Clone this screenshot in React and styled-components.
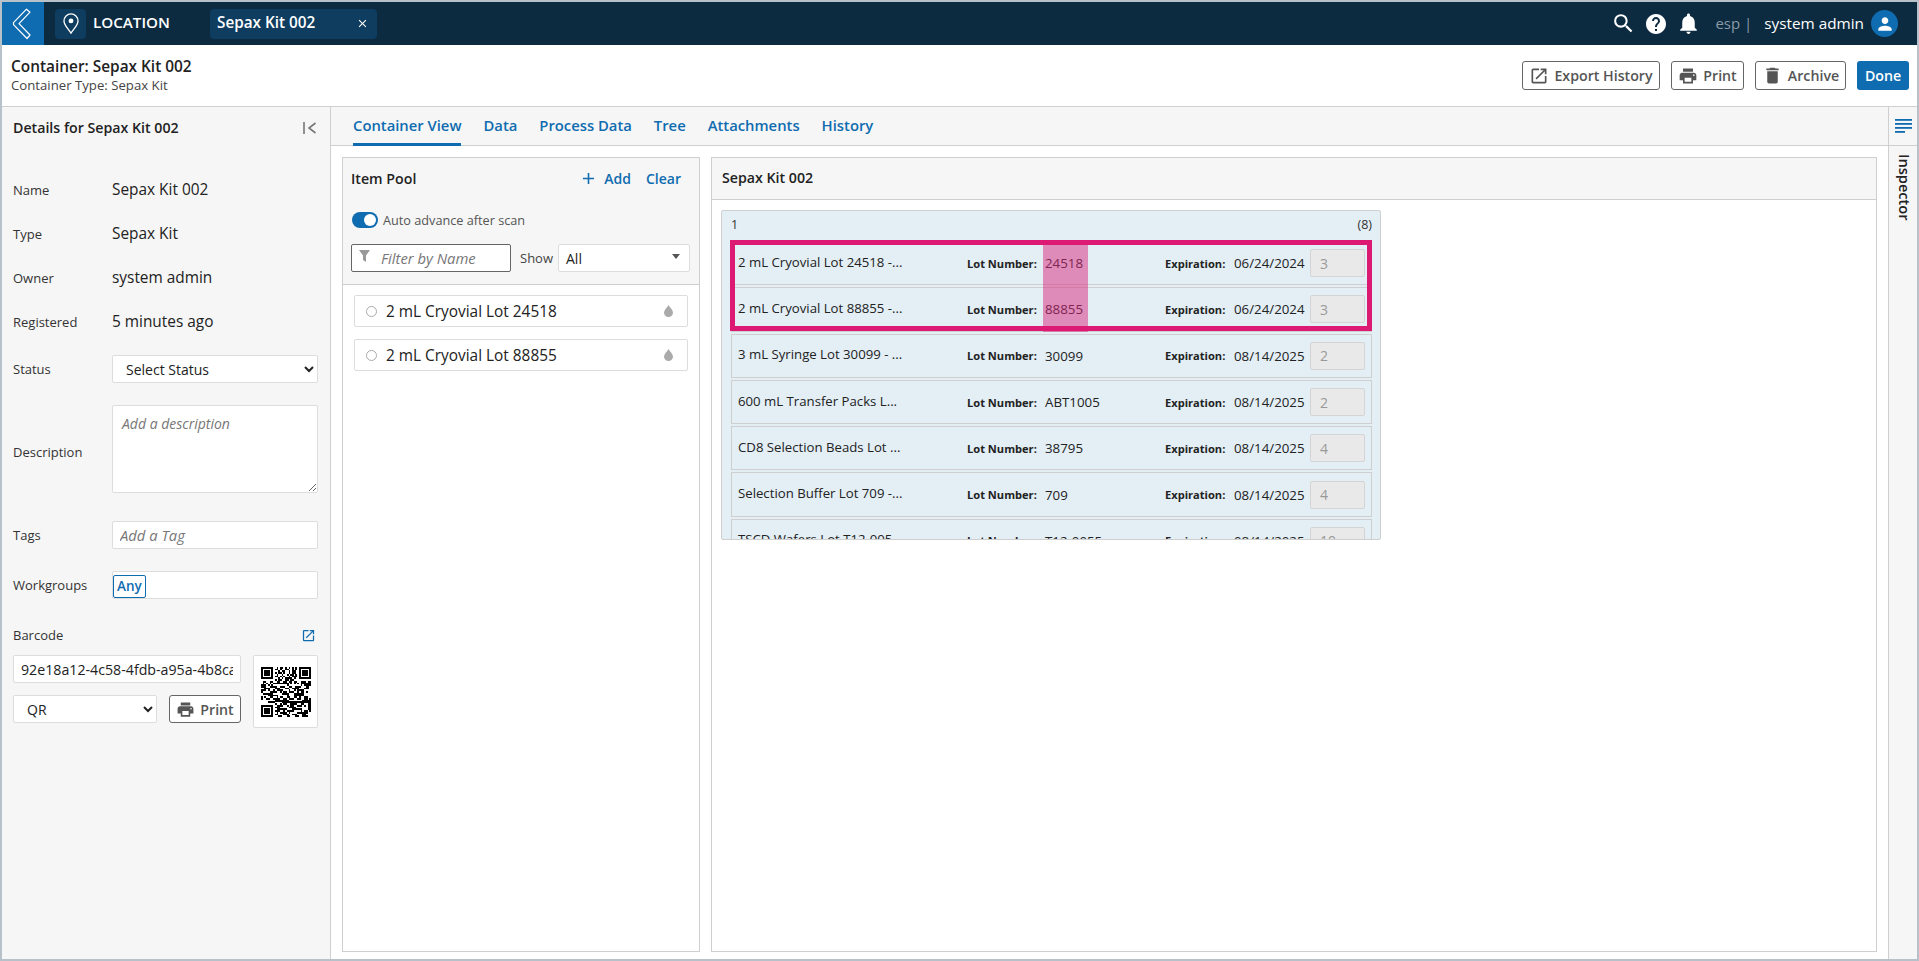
import React from "react";
import styled, { createGlobalStyle } from "styled-components";
import { MdPrint, MdDelete, MdOpenInNew, MdHelp, MdNotifications, MdPerson, MdSearch, MdClose, MdAdd } from "react-icons/md";

const blue = "#0f6cb0";
const line = "#cfcfcf";

const items = [
  { name: "2 mL Cryovial Lot 24518 -...", lot: "24518", exp: "06/24/2024", qty: 3 },
  { name: "2 mL Cryovial Lot 88855 -...", lot: "88855", exp: "06/24/2024", qty: 3 },
  { name: "3 mL Syringe Lot 30099 - ...", lot: "30099", exp: "08/14/2025", qty: 2 },
  { name: "600 mL Transfer Packs L...", lot: "ABT1005", exp: "08/14/2025", qty: 2 },
  { name: "CD8 Selection Beads Lot ...", lot: "38795", exp: "08/14/2025", qty: 4 },
  { name: "Selection Buffer Lot 709 -...", lot: "709", exp: "08/14/2025", qty: 4 },
  { name: "TSCD Wafers Lot T12-005...", lot: "T12-0055", exp: "08/14/2025", qty: 10 },
];

const tabs = ["Container View", "Data", "Process Data", "Tree", "Attachments", "History"];

// fake qr, just a fixed pattern
function QrCode() {
  const n = 29;
  const cells = [];
  const finder = (x, y) => {
    for (const [ox, oy] of [[0, 0], [n - 7, 0], [0, n - 7]]) {
      const a = x - ox;
      const b = y - oy;
      if (a >= 0 && a < 7 && b >= 0 && b < 7) {
        return a === 0 || a === 6 || b === 0 || b === 6 || (a > 1 && a < 5 && b > 1 && b < 5) ? 1 : 0;
      }
      if (a >= -1 && a <= 7 && b >= -1 && b <= 7) return 0;
    }
    return null;
  };
  for (let y = 0; y < n; y++) {
    for (let x = 0; x < n; x++) {
      const f = finder(x, y);
      const on = f !== null ? f : ((x * 7 + y * 13 + x * y * 5 + (x ^ y) * 3) % 11) % 2 === 0;
      if (on) cells.push(<rect key={x + "-" + y} x={x} y={y} width="1.02" height="1.02" />);
    }
  }
  return (
    <svg width="50" height="50" viewBox="0 0 29 29" fill="#000" shapeRendering="crispEdges">
      {cells}
    </svg>
  );
}

function Drop() {
  return (
    <svg width="9" height="12" viewBox="0 0 9 12" fill="#aaa">
      <path d="M4.5 0 C6 2.5 9 5 9 7.8 A4.5 4.2 0 0 1 0 7.8 C0 5 3 2.5 4.5 0 Z" />
    </svg>
  );
}

export default function App() {
  return (
    <Page>
      <GlobalStyle />
      <NavBar>
        <BackButton>
          <svg width="20" height="32" viewBox="0 0 20 32" fill="none" stroke="#fff" strokeWidth="1.2" strokeLinejoin="round">
            <path d="M14.5 1.2 L18 4.2 L7 15.6 L18 27 L15 30.5 L1.5 16.6 L1.5 14.6 Z" />
          </svg>
        </BackButton>
        <LocationIcon>
          <svg width="16" height="21" viewBox="0 0 18 24" fill="none" stroke="#fff" strokeWidth="1.5">
            <path d="M9 23 C6 18 1 14 1 9 A8 8 0 0 1 17 9 C17 14 12 18 9 23 Z" />
            <circle cx="9" cy="9" r="2.8" fill="#fff" stroke="none" />
          </svg>
        </LocationIcon>
        <LocationText>LOCATION</LocationText>
        <OpenTab>
          <span>Sepax Kit 002</span>
          <MdClose size={13} />
        </OpenTab>
        <NavRight>
          <MdSearch size={25} color="#fff" />
          <MdHelp size={24} color="#fff" />
          <MdNotifications size={25} color="#fff" />
          <NavLang>esp |</NavLang>
          <NavUser>system admin</NavUser>
          <Avatar><MdPerson size={20} color="#fff" /></Avatar>
        </NavRight>
      </NavBar>

      <TitleBar>
        <div>
          <Title>Container: Sepax Kit 002</Title>
          <SubTitle>Container Type: Sepax Kit</SubTitle>
        </div>
        <Actions>
          <OutlineButton $w={138}><MdOpenInNew size={20} />Export History</OutlineButton>
          <OutlineButton $w={73}><MdPrint size={20} />Print</OutlineButton>
          <OutlineButton $w={91}><MdDelete size={21} />Archive</OutlineButton>
          <DoneButton>Done</DoneButton>
        </Actions>
      </TitleBar>

      <Body>
        <Details>
          <DetailsHead>
            <span>Details for Sepax Kit 002</span>
            <svg width="14" height="14" viewBox="0 0 14 14" fill="none" stroke="#777" strokeWidth="1.6">
              <path d="M1 1 V13 M12.5 2 L6 7 L12.5 12" />
            </svg>
          </DetailsHead>
          <InfoRow $h={44}><Label>Name</Label><Value>Sepax Kit 002</Value></InfoRow>
          <InfoRow $h={44}><Label>Type</Label><Value>Sepax Kit</Value></InfoRow>
          <InfoRow $h={44}><Label>Owner</Label><Value>system admin</Value></InfoRow>
          <InfoRow $h={44}><Label>Registered</Label><Value>5 minutes ago</Value></InfoRow>
          <InfoRow $h={38} $mt={6}>
            <Label>Status</Label>
            <StatusSelect defaultValue="">
              <option value="">Select Status</option>
            </StatusSelect>
          </InfoRow>
          <InfoRow $h={88} $mt={17}>
            <DescLabel>Description</DescLabel>
            <TextBox placeholder="Add a description" />
          </InfoRow>
          <InfoRow $h={28} $mt={28}>
            <Label>Tags</Label>
            <FieldInput placeholder="Add a Tag" />
          </InfoRow>
          <InfoRow $h={28} $mt={22}>
            <Label>Workgroups</Label>
            <TagBox><AnyTag>Any</AnyTag></TagBox>
          </InfoRow>
          <BarcodeHead>
            <Label>Barcode</Label>
            <MdOpenInNew size={15} color={blue} />
          </BarcodeHead>
          <BarcodeGrid>
            <BarcodeFields>
              <BarcodeInput defaultValue="92e18a12-4c58-4fdb-a95a-4b8ca7d6e102" />
              <BarcodeRow>
                <QrSelect defaultValue="QR"><option>QR</option></QrSelect>
                <SmallPrint><MdPrint size={19} />Print</SmallPrint>
              </BarcodeRow>
            </BarcodeFields>
            <QrBox><QrCode /></QrBox>
          </BarcodeGrid>
        </Details>

        <Main>
          <TabBar>
            {tabs.map((t, i) => (
              <Tab key={t} $active={i === 0}>{t}</Tab>
            ))}
          </TabBar>
          <Panels>
            <ItemPool>
              <PoolHead>
                <PoolTitleRow>
                  <PanelTitle>Item Pool</PanelTitle>
                  <PoolLinks>
                    <PoolLink $gap={6}><MdAdd size={19} />Add</PoolLink>
                    <PoolLink>Clear</PoolLink>
                  </PoolLinks>
                </PoolTitleRow>
                <ToggleRow>
                  <Toggle />
                  <span>Auto advance after scan</span>
                </ToggleRow>
                <FilterRow>
                  <FilterBox>
                    <svg width="11" height="12" viewBox="0 0 11 12" fill="#999">
                      <path d="M0 0 H11 L7 5.5 V12 L4 10 V5.5 Z" />
                    </svg>
                    <FilterInput placeholder="Filter by Name" />
                  </FilterBox>
                  <ShowLabel>Show</ShowLabel>
                  <ShowSelect>
                    <span>All</span>
                    <Caret />
                  </ShowSelect>
                </FilterRow>
              </PoolHead>
              <PoolList>
                <PoolItem>
                  <Radio />
                  <span>2 mL Cryovial Lot 24518</span>
                  <Drop />
                </PoolItem>
                <PoolItem>
                  <Radio />
                  <span>2 mL Cryovial Lot 88855</span>
                  <Drop />
                </PoolItem>
              </PoolList>
            </ItemPool>

            <KitPanel>
              <KitHead><PanelTitle>Sepax Kit 002</PanelTitle></KitHead>
              <KitBody>
                <Slot>
                  <SlotHead>
                    <span>1</span>
                    <span>(8)</span>
                  </SlotHead>
                  <SlotRows>
                    {items.map((it) => (
                      <SlotRow key={it.lot}>
                        <RowName>{it.name}</RowName>
                        <RowLabel>Lot Number:</RowLabel>
                        <RowValue>{it.lot}</RowValue>
                        <RowLabel>Expiration:</RowLabel>
                        <RowValue>{it.exp}</RowValue>
                        <QtyInput disabled value={it.qty} readOnly />
                      </SlotRow>
                    ))}
                  </SlotRows>
                  <LotHighlight />
                  <RowsHighlight />
                </Slot>
              </KitBody>
            </KitPanel>
          </Panels>
        </Main>

        <Rail>
          <RailTop>
            <svg width="17" height="15" viewBox="0 0 17 15" fill={blue}>
              <rect width="17" height="1.8" y="0" />
              <rect width="17" height="1.8" y="4" />
              <rect width="17" height="1.8" y="8" />
              <rect width="10" height="1.8" y="12" />
            </svg>
          </RailTop>
          <RailLabel>Inspector</RailLabel>
        </Rail>
      </Body>
    </Page>
  );
}

const GlobalStyle = createGlobalStyle`
  * { box-sizing: border-box; }
  html, body { margin: 0; padding: 0; height: 100%; }
  body { font-family: "Open Sans", sans-serif; color: #222; background: #fff; }
  input, select, textarea, button { font-family: "Open Sans", sans-serif; }
  input::placeholder, textarea::placeholder { color: #777; font-style: italic; opacity: 1; }
`;

const Page = styled.div`
  height: 961px;
  display: flex;
  flex-direction: column;
  border: 2px solid #b6c1c9;
  overflow: hidden;
`;

const NavBar = styled.div`
  height: 43px;
  flex: none;
  background: #0c2a40;
  display: flex;
  align-items: center;
  color: #fff;
`;

const BackButton = styled.div`
  width: 42px;
  height: 43px;
  background: ${blue};
  display: flex;
  align-items: center;
  justify-content: center;
  padding-right: 2px;
`;

const LocationIcon = styled.div`
  width: 31px;
  height: 30px;
  margin-left: 11px;
  border-radius: 4px;
  background: #0f3d5f;
  display: flex;
  align-items: center;
  justify-content: center;
`;

const LocationText = styled.div`
  margin: -3px 0 0 7px;
  width: 117px;
  font-size: 15.2px;
  font-weight: 600;
`;

const OpenTab = styled.div`
  width: 167px;
  height: 30px;
  padding: 0 8px 0 7px;
  border-radius: 4px;
  background: #0f3d5f;
  display: flex;
  align-items: center;
  justify-content: space-between;
  font-size: 15.3px;
  font-weight: 600;
  span { margin-top: -3px; }
`;

const NavRight = styled.div`
  margin-left: auto;
  display: flex;
  align-items: center;
  padding-right: 19px;
  gap: 8px;
`;

const NavLang = styled.span`
  margin: -2px 0 0 6px;
  font-size: 15px;
  color: #8a9aa6;
`;

const NavUser = styled.span`
  margin: -2px 0 0 4px;
  font-size: 15.3px;
`;

const Avatar = styled.div`
  width: 27px;
  height: 27px;
  margin-left: -1px;
  border-radius: 50%;
  background: ${blue};
  display: flex;
  align-items: center;
  justify-content: center;
`;

const TitleBar = styled.div`
  height: 62px;
  flex: none;
  padding: 0 8px 0 9px;
  display: flex;
  justify-content: space-between;
  align-items: flex-start;
  border-bottom: 1px solid ${line};
`;

const Title = styled.div`
  margin-top: 12px;
  font-size: 15.4px;
  line-height: 20px;
  font-weight: 600;
`;

const SubTitle = styled.div`
  font-size: 13.2px;
  line-height: 16px;
  color: #444;
`;

const Actions = styled.div`
  margin-top: 16px;
  display: flex;
  gap: 11px;
`;

const OutlineButton = styled.button`
  width: ${(p) => p.$w}px;
  height: 29px;
  padding: 0;
  border: 1px solid #666;
  border-radius: 3px;
  background: #fff;
  color: #555;
  font-size: 14.2px;
  font-weight: 600;
  display: flex;
  align-items: center;
  justify-content: center;
  gap: 5px;
`;

const DoneButton = styled.button`
  width: 52px;
  height: 29px;
  padding: 0;
  border: none;
  border-radius: 3px;
  background: ${blue};
  color: #fff;
  font-size: 14.2px;
  font-weight: 600;
`;

const Body = styled.div`
  flex: 1;
  min-height: 0;
  display: flex;
`;

const Details = styled.aside`
  width: 329px;
  flex: none;
  padding: 0 12px 0 11px;
  background: #f6f6f6;
  border-right: 1px solid ${line};
`;

const DetailsHead = styled.div`
  height: 61px;
  padding: 1px 1px 21px 0;
  display: flex;
  align-items: center;
  justify-content: space-between;
  font-size: 14.2px;
  font-weight: 600;
`;

const InfoRow = styled.div`
  height: ${(p) => p.$h}px;
  margin-top: ${(p) => p.$mt || 0}px;
  display: grid;
  grid-template-columns: 99px 1fr;
  align-items: center;
`;

const Label = styled.span`
  font-size: 13px;
  color: #333;
`;

const DescLabel = styled(Label)`
  padding-top: 5px;
`;

const Value = styled.span`
  font-size: 15.4px;
  margin-top: -2px;
  color: #222;
`;

const StatusSelect = styled.select`
  width: 100%;
  height: 28px;
  padding-left: 9px;
  border: 1px solid #ddd;
  border-radius: 2px;
  background: #fff;
  font-size: 14px;
  color: #222;
`;

const TextBox = styled.textarea`
  width: 100%;
  height: 88px;
  padding: 8px 9px;
  border: 1px solid #ddd;
  border-radius: 2px;
  background: #fff;
  font-size: 14px;
  resize: vertical;
`;

const FieldInput = styled.input`
  width: 100%;
  height: 28px;
  padding: 0 7px;
  border: 1px solid #ddd;
  border-radius: 2px;
  background: #fff;
  font-size: 14.8px;
`;

const TagBox = styled.div`
  height: 28px;
  padding: 2px 0;
  border: 1px solid #ddd;
  border-radius: 2px;
  background: #fff;
`;

const AnyTag = styled.span`
  display: inline-block;
  height: 23px;
  line-height: 20px;
  padding: 0 3px;
  border: 1px solid ${blue};
  border-radius: 2px;
  font-size: 13.5px;
  font-weight: 600;
  color: ${blue};
`;

const BarcodeHead = styled.div`
  margin-top: 27px;
  height: 18px;
  padding-right: 2px;
  display: flex;
  align-items: center;
  justify-content: space-between;
`;

const BarcodeGrid = styled.div`
  margin-top: 11px;
  display: grid;
  grid-template-columns: 228px 65px;
  gap: 12px;
`;

const BarcodeFields = styled.div`
  display: flex;
  flex-direction: column;
  gap: 12px;
`;

const BarcodeInput = styled.input`
  width: 100%;
  height: 28px;
  padding: 0 7px;
  border: 1px solid #ddd;
  border-radius: 2px;
  background: #fff;
  font-size: 14.2px;
  color: #222;
`;

const BarcodeRow = styled.div`
  display: flex;
  justify-content: space-between;
`;

const QrSelect = styled.select`
  width: 144px;
  height: 28px;
  padding-left: 9px;
  border: 1px solid #ddd;
  border-radius: 2px;
  background: #fff;
  font-size: 14px;
  color: #222;
`;

const SmallPrint = styled(OutlineButton)`
  width: 72px;
  height: 28px;
`;

const QrBox = styled.div`
  height: 73px;
  border: 1px solid #ddd;
  border-radius: 2px;
  background: #fff;
  display: flex;
  align-items: center;
  justify-content: center;
`;

const Main = styled.main`
  flex: 1;
  min-width: 0;
  display: flex;
  flex-direction: column;
`;

const TabBar = styled.div`
  height: 39px;
  flex: none;
  padding-left: 22px;
  display: flex;
  gap: 22px;
  background: #f6f6f6;
  border-bottom: 1px solid ${line};
`;

const Tab = styled.div`
  height: 39px;
  line-height: 36px;
  font-size: 14.8px;
  font-weight: 600;
  color: ${blue};
  border-bottom: 3px solid ${(p) => (p.$active ? blue : "transparent")};
`;

const Panels = styled.div`
  flex: 1;
  min-height: 0;
  padding: 11px 11px 7px 11px;
  display: flex;
  gap: 11px;
`;

const ItemPool = styled.section`
  width: 358px;
  flex: none;
  border: 1px solid ${line};
`;

const PoolHead = styled.div`
  height: 127px;
  padding: 0 8px;
  background: #f6f6f6;
  border-bottom: 1px solid ${line};
`;

const PoolTitleRow = styled.div`
  height: 41px;
  display: flex;
  align-items: center;
  justify-content: space-between;
  padding-right: 10px;
`;

const PanelTitle = styled.span`
  font-size: 14.2px;
  font-weight: 600;
  color: #222;
`;

const PoolLinks = styled.div`
  display: flex;
  gap: 15px;
`;

const PoolLink = styled.span`
  display: flex;
  align-items: center;
  gap: ${(p) => p.$gap || 0}px;
  font-size: 14px;
  font-weight: 600;
  color: ${blue};
`;

const ToggleRow = styled.div`
  margin: 12px 0 0 1px;
  display: flex;
  align-items: center;
  gap: 5px;
  font-size: 12.7px;
  color: #555;
`;

const Toggle = styled.span`
  position: relative;
  width: 26px;
  height: 16px;
  border-radius: 8px;
  background: ${blue};
  &::after {
    content: "";
    position: absolute;
    top: 2px;
    right: 2px;
    width: 12px;
    height: 12px;
    border-radius: 50%;
    background: #fff;
  }
`;

const FilterRow = styled.div`
  margin-top: 15px;
  display: flex;
  align-items: center;
`;

const FilterBox = styled.div`
  width: 160px;
  height: 28px;
  padding: 0 7px;
  border: 1px solid #666;
  border-radius: 2px;
  background: #fff;
  display: flex;
  align-items: center;
  gap: 11px;
  svg { flex: none; margin-top: -4px; }
`;

const FilterInput = styled.input`
  width: 120px;
  padding: 0;
  border: none;
  outline: none;
  font-size: 14.8px;
  background: transparent;
`;

const ShowLabel = styled.span`
  margin-left: 9px;
  font-size: 13px;
  color: #444;
`;

const ShowSelect = styled.div`
  margin-left: 5px;
  width: 132px;
  height: 28px;
  padding: 0 9px 0 7px;
  border: 1px solid #ddd;
  border-radius: 2px;
  background: #fff;
  display: flex;
  align-items: center;
  justify-content: space-between;
  font-size: 14px;
  font-weight: 500;
`;

const Caret = styled.i`
  width: 0;
  height: 0;
  border-left: 4.5px solid transparent;
  border-right: 4.5px solid transparent;
  border-top: 5px solid #555;
  margin-top: -3px;
`;

const PoolList = styled.div`
  padding: 10px 11px;
  display: flex;
  flex-direction: column;
  gap: 12px;
`;

const PoolItem = styled.div`
  height: 32px;
  padding: 0 14px 0 11px;
  border: 1px solid #ddd;
  border-radius: 2px;
  background: #fff;
  display: flex;
  align-items: center;
  font-size: 15.4px;
  span { flex: 1; }
`;

const Radio = styled.i`
  width: 11px;
  height: 11px;
  margin-right: 9px;
  flex: none;
  border: 1px solid #aaa;
  border-radius: 50%;
`;

const KitPanel = styled.section`
  flex: 1;
  min-width: 0;
  border: 1px solid ${line};
  display: flex;
  flex-direction: column;
`;

const KitHead = styled.div`
  height: 42px;
  flex: none;
  padding: 0 0 2px 10px;
  display: flex;
  align-items: center;
  background: #f6f6f6;
  border-bottom: 1px solid ${line};
`;

const KitBody = styled.div`
  padding: 10px 9px;
`;

const Slot = styled.div`
  position: relative;
  width: 660px;
  height: 330px;
  background: #e3eef5;
  border: 1px solid ${line};
  border-radius: 2px;
  overflow: hidden;
`;

const SlotHead = styled.div`
  height: 30px;
  padding: 0 8px 3px 9px;
  display: flex;
  align-items: center;
  justify-content: space-between;
  font-size: 12.5px;
  color: #333;
`;

const SlotRows = styled.div`
  padding: 0 8px 0 9px;
  display: flex;
  flex-direction: column;
  gap: 2px;
`;

const SlotRow = styled.div`
  height: 44.3px;
  flex: none;
  padding-left: 6px;
  border: 1px solid ${line};
  display: grid;
  grid-template-columns: 229px 78px 120px 69px 76px 46px;
  align-items: center;
  font-size: 13px;
`;

const RowName = styled.span`
  font-size: 13.2px;
  margin-top: -3px;
  color: #222;
  white-space: nowrap;
`;

const RowLabel = styled.span`
  font-size: 11.1px;
  font-weight: 700;
  color: #222;
  white-space: nowrap;
`;

const RowValue = styled.span`
  font-size: 13.3px;
  color: #222;
`;

const QtyInput = styled.input`
  width: 55px;
  height: 28px;
  padding: 0 9px;
  border: 1px solid #d4d4d4;
  border-radius: 2px;
  background: #e9e9e9;
  color: #999;
  font-size: 14px;
`;

const RowsHighlight = styled.div`
  position: absolute;
  left: 8px;
  top: 29px;
  width: 642px;
  height: 91px;
  border: 5px solid #dc1a73;
  pointer-events: none;
`;

const LotHighlight = styled.div`
  position: absolute;
  left: 321px;
  top: 34px;
  width: 45px;
  height: 87px;
  background: rgba(218, 40, 125, 0.5);
  pointer-events: none;
`;

const Rail = styled.aside`
  width: 29px;
  flex: none;
  background: #f6f6f6;
  border-left: 1px solid ${line};
`;

const RailTop = styled.div`
  height: 39px;
  display: flex;
  align-items: center;
  justify-content: center;
  border-bottom: 1px solid ${line};
`;

const RailLabel = styled.div`
  margin: 8px 0 0 6px;
  writing-mode: vertical-rl;
  font-size: 14.6px;
  font-weight: 600;
  color: #222;
`;
